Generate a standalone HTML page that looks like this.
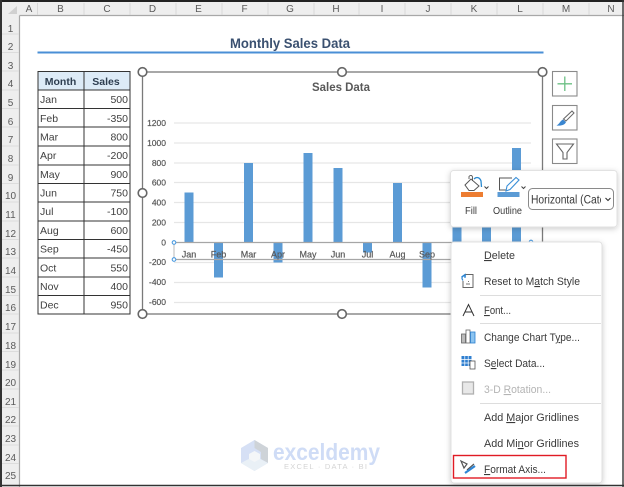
<!DOCTYPE html>
<html><head><meta charset="utf-8"><style>
html,body{margin:0;padding:0;background:#fff}
svg{display:block;font-family:"Liberation Sans",sans-serif}
.h{font-size:10px;fill:#5a5a5a;text-anchor:middle}
.t{font-size:10.5px;fill:#404040}
.r{font-size:10.5px;fill:#404040;text-anchor:end}
.a{font-size:8.5px;fill:#595959;text-anchor:end;stroke:#595959;stroke-width:.2}
.x{font-size:9px;fill:#595959;text-anchor:middle;stroke:#595959;stroke-width:.2}
.m{font-size:11px;fill:#3a3a3a}
.u{text-decoration:underline}
.hd{fill:#fff;stroke:#666;stroke-width:1.6}
</style></head><body>
<svg width="624" height="487" viewBox="0 0 624 487" xmlns="http://www.w3.org/2000/svg">
<defs><filter id="s" x="-10%" y="-10%" width="120%" height="125%"><feDropShadow dx="0" dy="1.5" stdDeviation="3" flood-color="#000" flood-opacity=".2"/></filter></defs>
<rect width="624" height="487" fill="#fff"/>
<!-- headers -->
<rect x="0" y="0" width="624" height="15.5" fill="#eeeeee"/>
<rect x="0" y="0" width="19.5" height="487" fill="#eeeeee"/>
<path d="M8 14L17 14L17 6Z" fill="#d0d0d0"/>
<path d="M19.5 15.5H624M19.5 15.5V487" stroke="#a8a8a8" stroke-width="1.2"/>
<path d="M37.500 3V15M84 3V15M130 3V15M176 3V15M222 3V15M268 3V15M314 3V15M359 3V15M405 3V15M451 3V15M497 3V15M543 3V15M589 3V15" stroke="#d8d8d8"/>
<g class="h">
<text x="29" y="12">A</text><text x="60.500" y="12">B</text><text x="107" y="12">C</text><text x="152.500" y="12">D</text><text x="198.500" y="12">E</text><text x="244.500" y="12">F</text><text x="290" y="12">G</text><text x="336" y="12">H</text><text x="382" y="12">I</text><text x="428" y="12">J</text><text x="474" y="12">K</text><text x="520" y="12">L</text><text x="566" y="12">M</text><text x="611" y="12">N</text>
<text x="10.500" y="32">1</text><text x="10.500" y="50">2</text><text x="10.500" y="69">3</text><text x="10.500" y="87">4</text><text x="10.500" y="106">5</text><text x="10.500" y="125">6</text><text x="10.500" y="143">7</text><text x="10.500" y="162">8</text><text x="10.500" y="181">9</text><text x="10.500" y="199">10</text><text x="10.500" y="218">11</text><text x="10.500" y="237">12</text><text x="10.500" y="255">13</text><text x="10.500" y="274">14</text><text x="10.500" y="293">15</text><text x="10.500" y="311">16</text><text x="10.500" y="330">17</text><text x="10.500" y="349">18</text><text x="10.500" y="368">19</text><text x="10.500" y="386">20</text><text x="10.500" y="405">21</text><text x="10.500" y="423">22</text><text x="10.500" y="442">23</text><text x="10.500" y="461">24</text><text x="10.500" y="479">25</text>
</g>
<path d="M2 34H19M2 52.500H19M2 71H19M2 90H19M2 108.500H19M2 127H19M2 146H19M2 165H19M2 183.500H19M2 202H19M2 221H19M2 239.500H19M2 258H19M2 277H19M2 295.500H19M2 314H19M2 333H19M2 351.500H19M2 370H19M2 389H19M2 407.500H19M2 426H19M2 445H19M2 463.500H19" stroke="#dcdcdc"/>
<!-- title -->
<text x="290" y="48" text-anchor="middle" font-size="14" font-weight="bold" fill="#3a5070" textLength="120" lengthAdjust="spacingAndGlyphs">Monthly Sales Data</text>
<rect x="37.500" y="51.500" width="506" height="2" fill="#4a8fd6"/>
<!-- table -->
<rect x="38" y="71.500" width="92" height="18.500" fill="#ddebf7"/>
<path d="M38 71.500H130V314H38ZM84 71.500V314M38 90H130M38 108.500H130M38 127H130M38 146H130M38 165H130M38 183.500H130M38 202H130M38 221H130M38 239.500H130M38 258H130M38 277H130M38 295.500H130" fill="none" stroke="#333" stroke-width="1"/>
<text x="60.500" y="85" text-anchor="middle" font-size="10.500" font-weight="bold" fill="#2e3e50">Month</text>
<text x="106" y="85" text-anchor="middle" font-size="10.500" font-weight="bold" fill="#2e3e50">Sales</text>
<g class="t"><text x="40" y="103">Jan</text><text x="40" y="122">Feb</text><text x="40" y="140.500">Mar</text><text x="40" y="159">Apr</text><text x="40" y="178">May</text><text x="40" y="196.500">Jun</text><text x="40" y="215">Jul</text><text x="40" y="234">Aug</text><text x="40" y="252.500">Sep</text><text x="40" y="271.500">Oct</text><text x="40" y="290">Nov</text><text x="40" y="308.500">Dec</text></g>
<g class="r"><text x="128" y="103">500</text><text x="128" y="122">-350</text><text x="128" y="140.500">800</text><text x="128" y="159">-200</text><text x="128" y="178">900</text><text x="128" y="196.500">750</text><text x="128" y="215">-100</text><text x="128" y="234">600</text><text x="128" y="252.500">-450</text><text x="128" y="271.500">550</text><text x="128" y="290">400</text><text x="128" y="308.500">950</text></g>
<!-- watermark -->
<path d="M254.500 440L268 448V463L254.500 471L241 463V448Z" fill="#d6e0f5"/>
<path d="M254.500 440L268 448V463L261 459V452L254.500 448Z" fill="#ced3d8"/>
<path d="M241 463L254.500 456L268 463L254.500 471Z" fill="#e9f0f6"/>
<path d="M254.500 451L260 454V459L254.500 462L249 459V454Z" fill="#f4f6f8"/>
<text x="273" y="460" font-size="23" font-weight="bold" fill="#cfdcf6" textLength="107" lengthAdjust="spacingAndGlyphs">exceldemy</text>
<text x="284" y="469" font-size="7.500" fill="#d4d4d4" textLength="83">EXCEL · DATA · BI</text>
<!-- chart -->
<path d="M174 123H531M174 143H531M174 163H531M174 182.500H531M174 202.500H531M174 222.500H531M174 262.500H531M174 282.500H531M174 302.500H531" stroke="#e6e6e6" stroke-width="1.200"/>
<text x="341" y="91" text-anchor="middle" font-size="12" font-weight="bold" fill="#595959" textLength="58" lengthAdjust="spacingAndGlyphs">Sales Data</text>
<g class="a"><text x="166" y="126">1200</text><text x="166" y="146">1000</text><text x="166" y="166">800</text><text x="166" y="185.500">600</text><text x="166" y="205.500">400</text><text x="166" y="225.500">200</text><text x="166" y="245.500">0</text><text x="166" y="265">-200</text><text x="166" y="285">-400</text><text x="166" y="305">-600</text></g>
<g fill="#5b9bd5">
<rect x="184.500" y="192.500" width="9" height="50"/><rect x="214" y="242" width="9" height="35.500"/><rect x="244" y="163" width="9" height="79"/><rect x="273.500" y="242" width="9" height="20.500"/><rect x="303.500" y="153" width="9" height="89"/><rect x="333.500" y="168" width="9" height="74"/><rect x="363" y="242" width="9" height="10.500"/><rect x="393" y="183" width="9" height="59"/><rect x="422.500" y="242" width="9" height="45.500"/><rect x="452.500" y="188" width="9" height="54"/><rect x="482" y="203" width="9" height="39"/><rect x="512" y="148" width="9" height="94"/>
</g>
<path d="M174 242.500H531M174 259.500H531" stroke="#a6a6a6" stroke-width="1.200"/>
<path d="M174 242.500V259.500" stroke="#c4c4c4" stroke-width="1.200"/>
<g class="x"><text x="189" y="257.500">Jan</text><text x="218.500" y="257.500">Feb</text><text x="248.500" y="257.500">Mar</text><text x="278" y="257.500">Apr</text><text x="308" y="257.500">May</text><text x="338" y="257.500">Jun</text><text x="367.500" y="257.500">Jul</text><text x="397.500" y="257.500">Aug</text><text x="427" y="257.500">Sep</text></g>
<g fill="#fff" stroke="#4a9ae0" stroke-width="1.100"><circle cx="174" cy="242.500" r="1.800"/><circle cx="174" cy="259.500" r="1.800"/><circle cx="531" cy="242" r="1.800"/></g>
<rect x="142.500" y="72" width="400" height="242" fill="none" stroke="#7a7a7a" stroke-width="1.300"/>
<g class="hd"><circle cx="142.500" cy="72" r="4.300"/><circle cx="342" cy="72" r="4.300"/><circle cx="542.500" cy="72" r="4.300"/><circle cx="142.500" cy="193" r="4.300"/><circle cx="142.500" cy="314" r="4.300"/><circle cx="342" cy="314" r="4.300"/></g>
<!-- side buttons -->
<g fill="#fff" stroke="#8a8a8a" stroke-width="1.100"><rect x="552.500" y="71.500" width="24.500" height="24.500"/><rect x="552.500" y="105.500" width="24.500" height="24.500"/><rect x="552.500" y="139" width="24.500" height="24.500"/></g>
<path d="M564.800 76.500V91M557.500 83.800H572" stroke="#6cc084" stroke-width="1.300" fill="none"/>
<path d="M572 111L574 113L566 121L563.500 119Z" fill="#fff" stroke="#666" stroke-width="1"/>
<path d="M563 119.500L566 122C565 125 561 126 556.500 125.500C559.500 124 560 121 563 119.500Z" fill="#3a86d0"/>
<path d="M556.500 144H573.500L567 152.500V159L563 159V152.500Z" fill="#fff" stroke="#666" stroke-width="1.100"/>
<!-- mini toolbar -->
<rect x="450.500" y="170.500" width="166.500" height="56.500" rx="3" fill="#fff" stroke="#e2e2e2" filter="url(#s)"/>
<path d="M465 185L471 179L479 186L474 190.500H469Z" fill="#fff" stroke="#555" stroke-width="1"/>
<path d="M469 179V176.500C470 175 472 175 472.500 177V181" fill="none" stroke="#555" stroke-width=".9"/>
<path d="M474 179C477 176 480 178 481 181L481.500 187" fill="none" stroke="#2a8ad0" stroke-width="1.300"/>
<rect x="461" y="192" width="22" height="5" fill="#ed7d31"/>
<path d="M484.500 186.500L486.500 188.500L488.500 186.500M521.500 186.500L523.500 188.500L525.500 186.500" fill="none" stroke="#444"/>
<path d="M512 178H499.500V190H508" fill="none" stroke="#555" stroke-width="1"/>
<path d="M506 191L507 186L516 177.500L519 180L510 189.500Z" fill="#fff" stroke="#3a8fd8" stroke-width="1.100"/>
<rect x="497.500" y="192" width="22" height="5" fill="#5b9bd5"/>
<text x="471" y="214" text-anchor="middle" font-size="10" fill="#3a3a3a" textLength="12" lengthAdjust="spacingAndGlyphs">Fill</text>
<text x="507.500" y="214" text-anchor="middle" font-size="10" fill="#3a3a3a" textLength="29" lengthAdjust="spacingAndGlyphs">Outline</text>
<rect x="528.500" y="188.500" width="85" height="21" rx="4" fill="#fff" stroke="#8a8a8a"/>
<svg x="529" y="189" width="72" height="20"><text x="2" y="14.500" font-size="11.500" fill="#3a3a3a" textLength="80" lengthAdjust="spacingAndGlyphs">Horizontal (Categ</text></svg>
<path d="M605.500 198L608 200.500L610.500 198" fill="none" stroke="#333" stroke-width="1.100"/>
<!-- context menu -->
<rect x="451" y="242" width="151" height="241" rx="3" fill="#fff" stroke="#e0e0e0" filter="url(#s)"/>
<path d="M480 295.500H601M480 323.500H601M480 403.500H601" stroke="#dddddd"/>
<g class="m">
<text x="484" y="259" textLength="31" lengthAdjust="spacingAndGlyphs"><tspan class="u">D</tspan>elete</text>
<text x="484" y="285" textLength="96" lengthAdjust="spacingAndGlyphs">Reset to M<tspan class="u">a</tspan>tch Style</text>
<text x="484" y="314" textLength="27" lengthAdjust="spacingAndGlyphs"><tspan class="u">F</tspan>ont...</text>
<text x="484" y="341" textLength="96" lengthAdjust="spacingAndGlyphs">Change Chart T<tspan class="u">y</tspan>pe...</text>
<text x="484" y="367" textLength="61" lengthAdjust="spacingAndGlyphs">S<tspan class="u">e</tspan>lect Data...</text>
<text x="484" y="393" textLength="67" lengthAdjust="spacingAndGlyphs" fill="#b4b4b4">3-D <tspan class="u">R</tspan>otation...</text>
<text x="484" y="421" textLength="95" lengthAdjust="spacingAndGlyphs">Add <tspan class="u">M</tspan>ajor Gridlines</text>
<text x="484" y="447" textLength="95" lengthAdjust="spacingAndGlyphs">Add Mi<tspan class="u">n</tspan>or Gridlines</text>
<text x="484" y="473" textLength="62" lengthAdjust="spacingAndGlyphs"><tspan class="u">F</tspan>ormat Axis...</text>
</g>
<!-- menu icons -->
<path d="M465 274.500H473V287.500H463V281" fill="#fff" stroke="#666" stroke-width="1"/>
<path d="M466 276C462 275 461 278 463 280.500M461.500 277L465 274.500L465 278" fill="none" stroke="#2a84d2" stroke-width="1.200"/>
<path d="M468 281.500H469M466 284H470" stroke="#777" stroke-width=".9"/>
<path d="M463 316L468.500 304.500L474 316M465 312H472" fill="none" stroke="#333" stroke-width="1"/>
<rect x="461.500" y="334" width="4" height="9" fill="#bbb" stroke="#666" stroke-width=".8"/>
<rect x="466" y="330" width="4" height="13" fill="#fff" stroke="#666" stroke-width=".8"/>
<rect x="470.500" y="332" width="4.500" height="11" fill="#8cc4f0" stroke="#2a7fd0" stroke-width=".8"/>
<rect x="461.500" y="356" width="10" height="10" fill="#2f7fd0"/>
<path d="M461.500 359.500H471.500M461.500 363H471.500M464.800 356V366M468.200 356V366" stroke="#fff" stroke-width=".7"/>
<rect x="470" y="361" width="5" height="8" fill="#fff" stroke="#555" stroke-width=".8"/>
<rect x="462.500" y="382" width="11" height="12" fill="#e8e8e8" stroke="#b0b0b0" stroke-width="1.300"/>
<path d="M461 461L467 464L464 468ZM467 470L474 464" fill="none" stroke="#555" stroke-width="1.200"/>
<path d="M465 473L475 466" stroke="#2f86d6" stroke-width="2.200"/>
<rect x="453.500" y="455.500" width="112.500" height="22.500" fill="none" stroke="#e01b24" stroke-width="1.400"/>
<!-- frame -->
<path d="M0 1H624" stroke="#222" stroke-width="2"/>
<path d="M1 0V487" stroke="#333" stroke-width="2"/>
<path d="M0 485.500H624" stroke="#333" stroke-width="1.400"/>
<path d="M623 0V487" stroke="#333" stroke-width="1.400"/>
</svg>
</body></html>
